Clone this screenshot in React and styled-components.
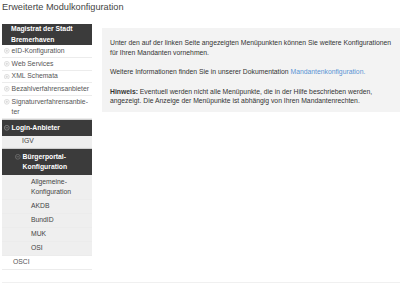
import styled, { createGlobalStyle } from 'styled-components';

const GlobalStyle = createGlobalStyle`
  html, body {
    margin: 0;
    padding: 0;
    background: #fff;
  }
  body {
    font-family: 'Liberation Sans', Arial, sans-serif;
    color: #333;
  }
`;

const Page = styled.div`
  width: 402px;
  height: 284px;
  padding: 0 2px;
  box-sizing: border-box;
  display: flex;
  flex-direction: column;
`;

const Title = styled.h1`
  margin: 2px 0 0;
  font-size: 9.2px;
  line-height: 11px;
  font-weight: normal;
  color: #444;
`;

const Layout = styled.div`
  display: flex;
  align-items: flex-start;
  gap: 10px;
  margin-top: 11px;
`;

const Sidebar = styled.ul`
  width: 90px;
  flex: none;
  list-style: none;
  margin: 0;
  padding: 0;
  font-size: 6.8px;
  line-height: 10.3px;
`;

const Header = styled.li`
  background: #3b3b3b;
  color: #fff;
  font-weight: bold;
  padding: 0.3px 4px 0.3px 9px;
`;

const Item = styled.li`
  display: flex;
  align-items: flex-start;
  gap: 2px;
  padding: ${(p) => p.$pad}px 4px ${(p) => p.$pad}px ${(p) => p.$indent}px;
  border-bottom: 1.5px solid #ececec;
  color: ${(p) => (p.$sub ? '#444' : '#555')};
  background: ${(p) => (p.$sub ? '#efefef' : '#fff')};
  svg {
    flex: none;
    margin-top: 2.6px;
  }
`;

const Active = styled.li`
  display: flex;
  align-items: flex-start;
  gap: 2px;
  padding: 2.8px 4px 2.8px ${(p) => p.$indent}px;
  background: #3b3b3b;
  border-top: 1px solid #cfcfcf;
  color: #fff;
  font-weight: bold;
  svg {
    flex: none;
    margin-top: 2.6px;
  }
`;

const Panel = styled.div`
  flex: 1;
  margin-top: 4px;
  background: #f3f3f3;
  padding: 10px 5px 6px 8px;
  font-size: 6.8px;
  line-height: 9.7px;
  color: #333;
  p {
    margin: 0 0 9.8px;
  }
  p:last-child {
    margin-bottom: 0;
  }
  a {
    color: #5a93d3;
    text-decoration: none;
  }
`;

const Note = styled.strong`
  font-weight: bold;
`;

const Footer = styled.div`
  margin-top: auto;
  margin-bottom: 1px;
  border-top: 1.5px solid #f0f0f0;
`;

function Toggle({ open, color }) {
  return (
    <svg width="5.6" height="5.6" viewBox="0 0 10 10">
      <circle cx="5" cy="5" r="4.3" fill="none" stroke={color} strokeWidth="1" />
      <line x1="2.6" y1="5" x2="7.4" y2="5" stroke={color} strokeWidth="1" />
      {!open && <line x1="5" y1="2.6" x2="5" y2="7.4" stroke={color} strokeWidth="1" />}
    </svg>
  );
}

const topItems = [
  'eID-Konfiguration',
  'Web Services',
  'XML Schemata',
  'Bezahlverfahrensanbieter',
  'Signaturverfahrensanbie­ter',
];

const subItems = ['Allgemeine-Konfiguration', 'AKDB', 'BundID', 'MUK', 'OSI'];

export default function App() {
  return (
    <>
      <GlobalStyle />
      <Page>
        <Title>Erweiterte Modulkonfiguration</Title>
        <Layout>
          <Sidebar>
            <Header>
              Magistrat der Stadt
              <br />
              Bremerhaven
            </Header>
            {topItems.map((label) => (
              <Item key={label} $indent={2} $pad={0.7}>
                <Toggle color="#c4c4c4" />
                <span>{label}</span>
              </Item>
            ))}
            <Active $indent={2}>
              <Toggle open color="#aaa" />
              <span>Login-Anbieter</span>
            </Active>
            <Item $indent={20} $sub $pad={0.5}>
              IGV
            </Item>
            <Active $indent={13}>
              <Toggle open color="#888" />
              <span>
                Bürgerportal-
                <br />
                Konfiguration
              </span>
            </Active>
            {subItems.map((label) => (
              <Item key={label} $indent={29} $sub $pad={1.4}>
                <span>
                  {label === 'Allgemeine-Konfiguration' ? (
                    <>
                      Allgemeine-
                      <br />
                      Konfiguration
                    </>
                  ) : (
                    label
                  )}
                </span>
              </Item>
            ))}
            <Item $indent={11} $pad={1.4}>
              OSCI
            </Item>
          </Sidebar>
          <Panel>
            <p>
              Unter den auf der linken Seite angezeigten Menüpunkten können Sie weitere
              Konfigurationen für Ihren Mandanten vornehmen.
            </p>
            <p>
              Weitere Informationen finden Sie in unserer Dokumentation{' '}
              <a href="#">Mandantenkonfiguration.</a>
            </p>
            <p>
              <Note>Hinweis:</Note> Eventuell werden nicht alle Menüpunkte, die in der
              Hilfe beschrieben werden, angezeigt. Die Anzeige der Menüpunkte ist abhängig
              von Ihren Mandantenrechten.
            </p>
          </Panel>
        </Layout>
        <Footer />
      </Page>
    </>
  );
}
